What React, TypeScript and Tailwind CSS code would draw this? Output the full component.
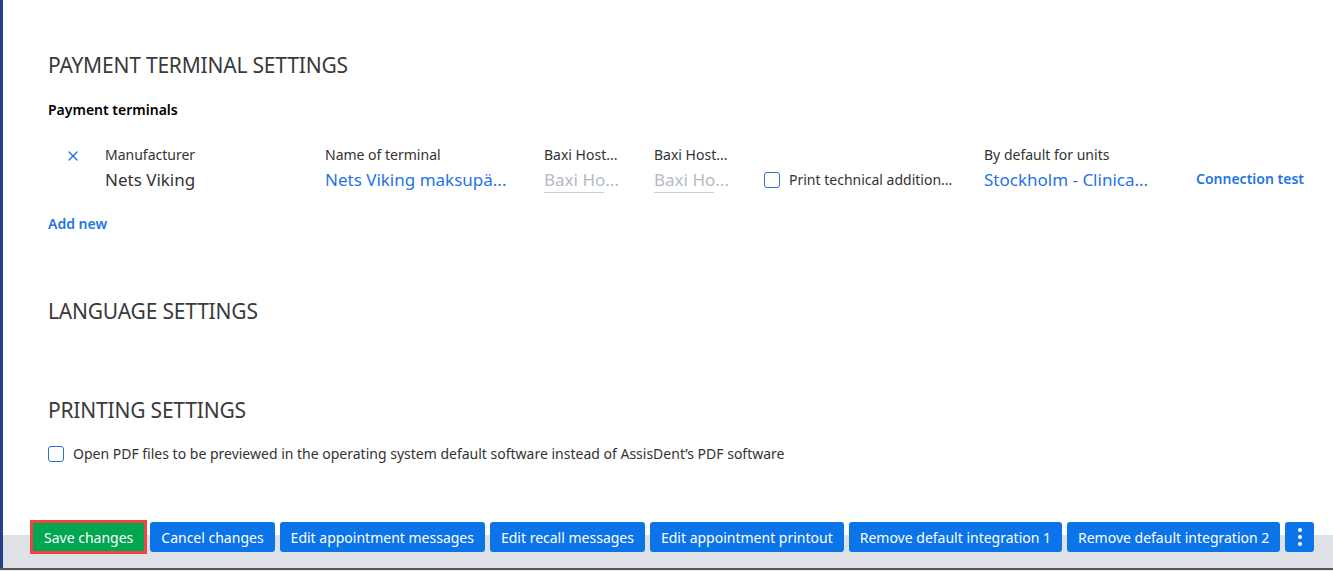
import { X } from "lucide-react";

const blue = "text-[#1f74e6]";

function Checkbox() {
  return <span className="inline-block h-4 w-4 shrink-0 rounded-[3px] border-[1.5px] border-[#2a6fd1] bg-white" />;
}

function Field({ label, value, width, placeholder }: { label: string; value: string; width: string; placeholder?: boolean }) {
  return (
    <div className={`flex flex-col ${width}`}>
      <span className="text-[14px] leading-5 text-[#333]">{label}</span>
      {placeholder ? (
        <div className="mt-[3px] w-[60px] border-b border-[#c9cfd6] whitespace-nowrap text-[17px] leading-6 text-[#b3bac4]">{value}</div>
      ) : (
        <span className={`mt-[3px] whitespace-nowrap text-[17px] leading-6 ${value === "Nets Viking" ? "text-[#333]" : blue}`}>{value}</span>
      )}
    </div>
  );
}

const buttons = [
  "Cancel changes",
  "Edit appointment messages",
  "Edit recall messages",
  "Edit appointment printout",
  "Remove default integration 1",
  "Remove default integration 2",
];

export default function App() {
  return (
    <div className="flex h-[571px] w-[1333px] flex-col overflow-hidden bg-white font-['Noto_Sans',sans-serif] text-[#333]">
      <div className="flex flex-1 flex-col border-l-[3px] border-[#27408b]">
        <div className="flex flex-col pl-[45px]">
          <h1 className="mt-[50px] text-[21px] leading-[30px] font-normal tracking-[-0.2px] text-[#3a3a3a]">PAYMENT TERMINAL SETTINGS</h1>
          <h2 className="mt-[20px] text-[14px] leading-5 font-semibold text-black">Payment terminals</h2>

          <div className="mt-[25px] flex items-start">
            <X className="mt-[3px] ml-[17px] mr-[24px] h-[16px] w-[16px] text-[#1f74e6]" strokeWidth={2} />
            <Field label="Manufacturer" value="Nets Viking" width="w-[220px]" />
            <Field label="Name of terminal" value="Nets Viking maksupä..." width="w-[219px]" />
            <Field label="Baxi Host..." value="Baxi Ho..." width="w-[110px]" placeholder />
            <Field label="Baxi Host..." value="Baxi Ho..." width="w-[110px]" placeholder />
            <label className="mt-[24px] flex w-[220px] items-center gap-[9px] text-[14px] text-[#333]">
              <Checkbox />
              <span>Print technical addition...</span>
            </label>
            <Field label="By default for units" value="Stockholm - Clinica..." width="w-[212px]" />
            <a href="#" className="mt-[24px] text-[14px] leading-5 font-semibold text-[#1f74e6]">Connection test</a>
          </div>

          <a href="#" className="mt-[21px] text-[14px] leading-5 font-semibold text-[#1f74e6]">Add new</a>

          <h1 className="mt-[62px] text-[21px] leading-[30px] tracking-[-0.2px] text-[#3a3a3a]">LANGUAGE SETTINGS</h1>
          <h1 className="mt-[69px] text-[21px] leading-[30px] tracking-[-0.2px] text-[#3a3a3a]">PRINTING SETTINGS</h1>

          <label className="mt-[18px] flex items-center gap-[9px] text-[14px] text-[#333]">
            <Checkbox />
            <span>Open PDF files to be previewed in the operating system default software instead of AssisDent’s PDF software</span>
          </label>
        </div>

        <div className="mt-auto flex items-center gap-[5px] bg-[linear-gradient(to_bottom,white_15px,#dee2e6_15px)] pb-[14px] pl-[27px]">
          <div className="-mr-[2px] border-[3px] border-[#f04444]">
            <button className="h-[28px] bg-[#00a650] px-[11px] text-[14px] text-white">Save changes</button>
          </div>
          {buttons.map((b) => (
            <button key={b} className="h-[30px] rounded-[3px] bg-[#0a74e8] px-[11px] text-[14px] text-white">{b}</button>
          ))}
          <button className="flex h-[30px] w-[29px] flex-col items-center justify-center gap-[3px] rounded-[3px] bg-[#0a74e8]">
            <span className="h-[4px] w-[4px] rounded-full bg-white" />
            <span className="h-[4px] w-[4px] rounded-full bg-white" />
            <span className="h-[4px] w-[4px] rounded-full bg-white" />
          </button>
        </div>
      </div>
      <div className="h-[2px] bg-[#555]" />
      <div className="h-[1px] bg-[#eee]" />
    </div>
  );
}
